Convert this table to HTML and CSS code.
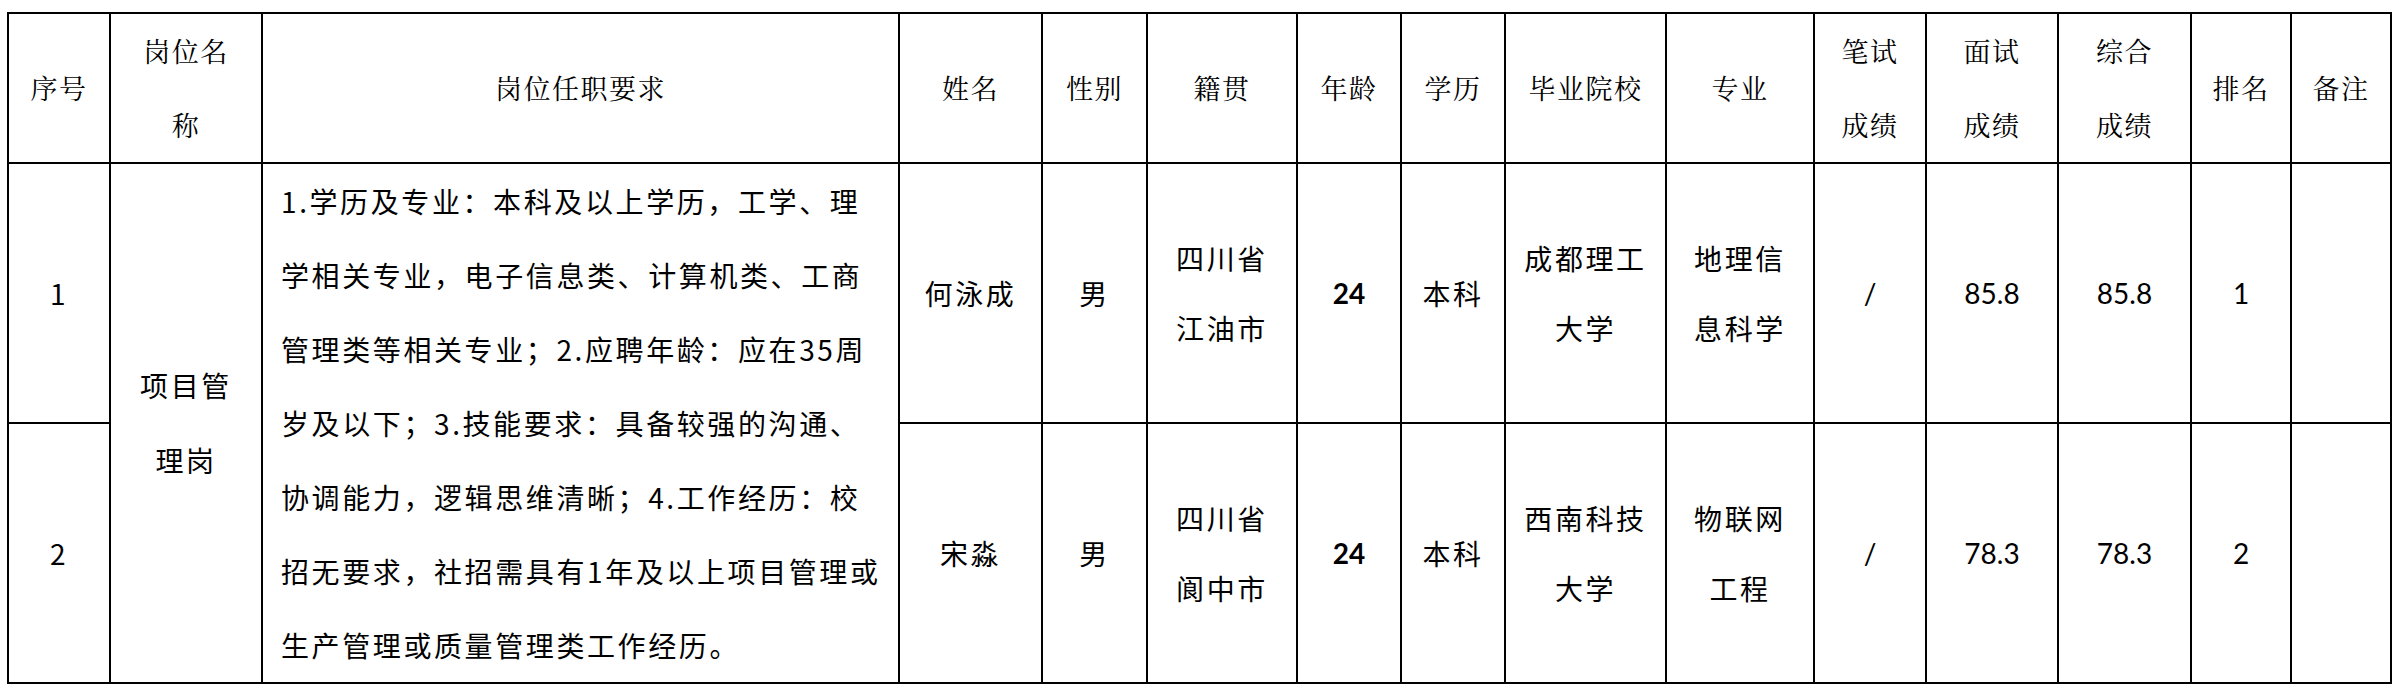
FILE: index.html
```html
<!DOCTYPE html>
<html lang="zh-CN">
<head>
<meta charset="utf-8">
<title>拟聘人员名单</title>
<link rel="stylesheet" href="styles.css">
</head>
<body>
<div class="page">
  <table class="grid">
    <colgroup>
      <col class="w-no"><col class="w-post"><col class="w-req"><col class="w-name"><col class="w-sex">
      <col class="w-home"><col class="w-age"><col class="w-edu"><col class="w-school"><col class="w-major">
      <col class="w-written"><col class="w-interview"><col class="w-total"><col class="w-rank"><col class="w-note">
    </colgroup>
    <thead>
      <tr class="head">
        <th>序号</th>
        <th>岗位名<br>称</th>
        <th>岗位任职要求</th>
        <th>姓名</th>
        <th>性别</th>
        <th>籍贯</th>
        <th>年龄</th>
        <th>学历</th>
        <th>毕业院校</th>
        <th>专业</th>
        <th>笔试<br>成绩</th>
        <th>面试<br>成绩</th>
        <th>综合<br>成绩</th>
        <th>排名</th>
        <th>备注</th>
      </tr>
    </thead>
    <tbody>
      <tr class="row">
        <td>1</td>
        <td rowspan="2" class="post">项目管<br>理岗</td>
        <td rowspan="2" class="req">1.学历及专业：本科及以上学历，工学、理<br>学相关专业，电子信息类、计算机类、工商<br>管理类等相关专业；2.应聘年龄：应在35周<br>岁及以下；3.技能要求：具备较强的沟通、<br>协调能力，逻辑思维清晰；4.工作经历：校<br>招无要求，社招需具有1年及以上项目管理或<br>生产管理或质量管理类工作经历。</td>
        <td>何泳成</td>
        <td>男</td>
        <td>四川省<br>江油市</td>
        <td class="latin bold">24</td>
        <td>本科</td>
        <td>成都理工<br>大学</td>
        <td>地理信<br>息科学</td>
        <td class="latin">/</td>
        <td class="latin">85.8</td>
        <td class="latin">85.8</td>
        <td class="latin">1</td>
        <td></td>
      </tr>
      <tr class="row">
        <td>2</td>
        <td>宋淼</td>
        <td>男</td>
        <td>四川省<br>阆中市</td>
        <td class="latin bold">24</td>
        <td>本科</td>
        <td>西南科技<br>大学</td>
        <td>物联网<br>工程</td>
        <td class="latin">/</td>
        <td class="latin">78.3</td>
        <td class="latin">78.3</td>
        <td class="latin">2</td>
        <td></td>
      </tr>
    </tbody>
  </table>
</div>
</body>
</html>
```

FILE: styles.css
```css
html, body {
  margin: 0;
  padding: 0;
  background: #ffffff;
}

.page {
  padding: 12px 0 0 7px;
}

.grid {
  border-collapse: collapse;
  table-layout: fixed;
  width: 2385px;
  color: #000000;
  font-family: "Noto Sans CJK SC", "Noto Sans", sans-serif;
}

.w-no { width: 102px; }
.w-post { width: 152px; }
.w-req { width: 637px; }
.w-name { width: 143px; }
.w-sex { width: 105px; }
.w-home { width: 150px; }
.w-age { width: 104px; }
.w-edu { width: 104px; }
.w-school { width: 161px; }
.w-major { width: 148px; }
.w-written { width: 112px; }
.w-interview { width: 132px; }
.w-total { width: 133px; }
.w-rank { width: 100px; }
.w-note { width: 100px; }

.grid th,
.grid td {
  border: 2px solid #000000;
  padding: 0;
  text-align: center;
  vertical-align: middle;
  white-space: nowrap;
}

.grid th {
  font-family: "Noto Serif CJK SC", "Noto Sans CJK SC", serif;
  font-weight: 400;
  font-size: 27px;
  line-height: 74px;
  letter-spacing: 1.5px;
}

.head {
  height: 150px;
}

.row {
  height: 259px;
}

.grid td {
  font-size: 28px;
  line-height: 70px;
  letter-spacing: 2.6px;
}

.grid td.post {
  line-height: 75px;
}

.grid td.req {
  text-align: left;
  padding-left: 18px;
  line-height: 74px;
}

.grid td.latin {
  font-family: "Lato", "Liberation Sans", sans-serif;
  font-size: 28px;
  letter-spacing: 0;
}

.grid td.bold {
  font-weight: 700;
}
```
